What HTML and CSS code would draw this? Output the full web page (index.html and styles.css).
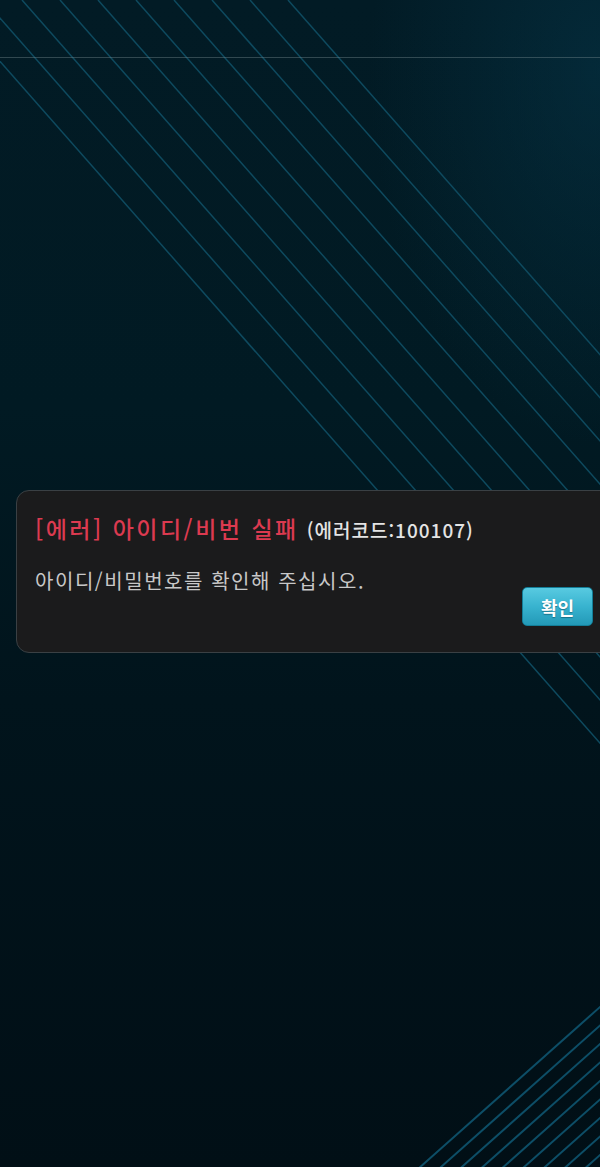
FILE: index.html
```html
<!DOCTYPE html>
<html lang="ko">
<head>
<meta charset="utf-8">
<title>에러</title>
<link rel="stylesheet" href="styles.css">
</head>
<body>
<div class="screen">
  <svg class="bg-lines" viewBox="0 0 600 1167" width="600" height="1167" aria-hidden="true">
    <g class="diag">
      <line x1="-54" y1="0" x2="973" y2="1167"/>
      <line x1="-16" y1="0" x2="1011" y2="1167"/>
      <line x1="22" y1="0" x2="1049" y2="1167"/>
      <line x1="60" y1="0" x2="1087" y2="1167"/>
      <line x1="98" y1="0" x2="1125" y2="1167"/>
      <line x1="136" y1="0" x2="1163" y2="1167"/>
      <line x1="174" y1="0" x2="1201" y2="1167"/>
      <line x1="212" y1="0" x2="1239" y2="1167"/>
      <line x1="250" y1="0" x2="1277" y2="1167"/>
      <line x1="288" y1="0" x2="1315" y2="1167"/>
    </g>
    <g class="rise">
      <line x1="700" y1="918" x2="300" y2="1274"/>
      <line x1="700" y1="936.5" x2="300" y2="1292.5"/>
      <line x1="700" y1="955" x2="300" y2="1311"/>
      <line x1="700" y1="973.5" x2="300" y2="1329.5"/>
      <line x1="700" y1="992" x2="300" y2="1348"/>
      <line x1="700" y1="1010.5" x2="300" y2="1366.5"/>
      <line x1="700" y1="1029" x2="300" y2="1385"/>
      <line x1="700" y1="1047.5" x2="300" y2="1403.5"/>
      <line x1="700" y1="1066" x2="300" y2="1422"/>
      <line x1="700" y1="1084.5" x2="300" y2="1440.5"/>
    </g>
  </svg>

  <header class="topbar"></header>

  <section class="dialog" role="alertdialog">
    <h1 class="dialog-title"><span class="title-red">[에러] 아이디/비번 실패</span><span class="title-code">(에러코드:100107)</span></h1>
    <div class="dialog-body">
      <p class="dialog-msg">아이디/비밀번호를 확인해 주십시오.</p>
      <button class="btn-ok" type="button">확인</button>
    </div>
  </section>
</div>
</body>
</html>
```

FILE: styles.css
```css
html, body {
  margin: 0;
  padding: 0;
}

body {
  width: 600px;
  height: 1167px;
  overflow: hidden;
  font-family: "Noto Sans CJK KR", "Noto Sans", sans-serif;
  background: #01141c;
}

.screen {
  position: relative;
  width: 600px;
  height: 1167px;
  overflow: hidden;
  display: flex;
  flex-direction: column;
  background:
    radial-gradient(ellipse 48% 40% at 100% 6%, rgba(6, 56, 76, 0.5), rgba(6, 56, 76, 0) 80%),
    linear-gradient(180deg, #021b25 0%, #011a23 35%, #01141c 60%, #010f16 100%);
}

.bg-lines {
  position: absolute;
  left: 0;
  top: 0;
  z-index: 0;
}

.diag line {
  stroke: #0e4a5f;
  stroke-width: 1.5;
}

.rise line {
  stroke: #0d4e67;
  stroke-width: 2;
}

.topbar {
  position: relative;
  z-index: 1;
  height: 57px;
  flex: none;
  border-bottom: 1px solid rgba(120, 140, 145, 0.4);
}

.dialog {
  position: relative;
  z-index: 1;
  box-sizing: border-box;
  flex: none;
  margin: 432px 0 0 16px;
  width: 606px;
  height: 163px;
  padding: 22px 0 0 18px;
  background: #1b1b1c;
  border: 1px solid #3a4044;
  border-radius: 13px;
}

.dialog-title {
  display: flex;
  align-items: baseline;
  gap: 8px;
  margin: 0;
  font-size: 23px;
  line-height: 30px;
  font-weight: 500;
  white-space: nowrap;
}

.title-red {
  color: #dc3a50;
  letter-spacing: 2.5px;
}

.title-code {
  color: #e4e4e4;
  font-size: 19px;
  font-weight: 500;
  letter-spacing: 1px;
}

.dialog-body {
  display: flex;
  align-items: flex-start;
  justify-content: space-between;
  margin-top: 22px;
  padding-right: 28px;
}

.dialog-msg {
  margin: 0;
  color: #c8c8c8;
  font-size: 20px;
  line-height: 28px;
  font-weight: 400;
  letter-spacing: 1.55px;
}

.btn-ok {
  margin-top: 20px;
  width: 71px;
  height: 39px;
  padding: 0;
  border: 1px solid #137e98;
  border-radius: 5px;
  background: linear-gradient(180deg, #58cae1 0%, #38b3cf 50%, #2399b7 100%);
  color: #ffffff;
  font-family: "Noto Sans CJK KR", sans-serif;
  font-size: 18px;
  font-weight: 700;
  text-shadow: 0 1px 1px rgba(0, 60, 80, 0.5);
}
```
